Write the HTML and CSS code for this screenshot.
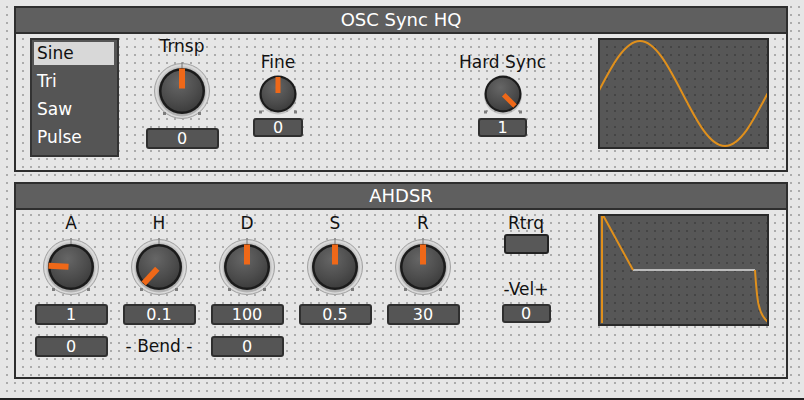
FILE: index.html
```html
<!DOCTYPE html>
<html>
<head>
<meta charset="utf-8">
<link rel="stylesheet" href="styles.css">
</head>
<body>
<div class="app">
  <svg class="defs" width="0" height="0">
    <defs>
      <radialGradient id="kb" cx="0.42" cy="0.3" r="0.8">
        <stop offset="0" stop-color="#666"/>
        <stop offset="0.6" stop-color="#4c4c4c"/>
        <stop offset="1" stop-color="#383838"/>
      </radialGradient>
      <radialGradient id="halo" cx="0.5" cy="0.5" r="0.5">
        <stop offset="0.78" stop-color="#8e8e8e"/>
        <stop offset="0.86" stop-color="#c4c4c4"/>
        <stop offset="0.94" stop-color="#dcdcdc"/>
        <stop offset="1" stop-color="#d0d0d0"/>
      </radialGradient>
      <symbol id="bigknob" viewBox="0 0 58 58">
        <circle cx="29" cy="29" r="27.5" fill="url(#halo)" stroke="#a2a2a2" stroke-width="1"/>
        <rect x="28.5" y="0" width="1" height="6" fill="#777"/>
        <rect x="10" y="50" width="3" height="3" fill="#7c7c7c"/>
        <rect x="45" y="50" width="3" height="3" fill="#7c7c7c"/>
        <circle cx="29" cy="31" r="23.5" fill="#9a9a9a" opacity="0.55"/>
        <circle cx="29" cy="29" r="23" fill="#1b1b1b"/>
        <circle cx="29" cy="29" r="20.5" fill="url(#kb)"/>
      </symbol>
      <symbol id="smallknob" viewBox="0 0 44 42">
        <rect x="3" y="36.5" width="3" height="3" fill="#7c7c7c"/>
        <rect x="38" y="36.5" width="3" height="3" fill="#7c7c7c"/>
        <circle cx="22" cy="21.5" r="19" fill="#9a9a9a" opacity="0.45"/>
        <circle cx="22" cy="20" r="18.5" fill="#1b1b1b"/>
        <circle cx="22" cy="20" r="16.3" fill="url(#kb)"/>
      </symbol>
    </defs>
  </svg>

  <section class="panel p1">
    <div class="head">OSC Sync HQ</div>
    <div class="body">
      <ul class="list">
        <li class="sel">Sine</li>
        <li>Tri</li>
        <li>Saw</li>
        <li>Pulse</li>
      </ul>

      <div class="ctl c-trnsp">
        <div class="lbl">Trnsp</div>
        <svg class="kbig" viewBox="0 0 58 58"><use href="#bigknob" width="58" height="58"/><rect class="ind" x="26" y="6.5" width="6" height="20"/></svg>
        <div class="val w73">0</div>
      </div>

      <div class="ctl c-fine">
        <div class="lbl">Fine</div>
        <svg class="ksmall" viewBox="0 0 44 42"><use href="#smallknob" width="44" height="42"/><rect class="ind" x="19.5" y="3" width="5" height="16"/></svg>
        <div class="val sm w50">0</div>
      </div>

      <div class="ctl c-hard">
        <div class="lbl">Hard Sync</div>
        <svg class="ksmall" viewBox="0 0 44 42"><use href="#smallknob" width="44" height="42"/><rect class="ind" x="19.5" y="3" width="5" height="16" transform="rotate(135 22 20)"/></svg>
        <div class="val sm w49">1</div>
      </div>

      <div class="scope s1">
        <svg viewBox="0 0 167 107" width="167" height="107">
          <path class="wave" d="M-2.5,53.5 C11.36,26.6 24.62,1 40,1 C55.38,1 68.64,26.6 82.5,53.5 C96.36,80.4 109.62,106 125,106 C140.38,106 153.64,80.4 167.5,53.5"/>
        </svg>
      </div>
    </div>
  </section>

  <section class="panel p2">
    <div class="head">AHDSR</div>
    <div class="body">
      <div class="ctl c-env first">
        <div class="lbl">A</div>
        <svg class="kbig" viewBox="0 0 58 58"><use href="#bigknob" width="58" height="58"/><rect class="ind" x="26" y="6.5" width="6" height="20" transform="rotate(-87 29 29)"/></svg>
        <div class="val w73">1</div>
        <div class="val w73 row2">0</div>
      </div>
      <div class="ctl c-env">
        <div class="lbl">H</div>
        <svg class="kbig" viewBox="0 0 58 58"><use href="#bigknob" width="58" height="58"/><rect class="ind" x="26" y="6.5" width="6" height="20" transform="rotate(-137 29 29)"/></svg>
        <div class="val w73">0.1</div>
        <div class="bend row2">- Bend -</div>
      </div>
      <div class="ctl c-env">
        <div class="lbl">D</div>
        <svg class="kbig" viewBox="0 0 58 58"><use href="#bigknob" width="58" height="58"/><rect class="ind" x="26" y="6.5" width="6" height="20"/></svg>
        <div class="val w73">100</div>
        <div class="val w73 row2">0</div>
      </div>
      <div class="ctl c-env">
        <div class="lbl">S</div>
        <svg class="kbig" viewBox="0 0 58 58"><use href="#bigknob" width="58" height="58"/><rect class="ind" x="26" y="6.5" width="6" height="20"/></svg>
        <div class="val w73">0.5</div>
      </div>
      <div class="ctl c-env">
        <div class="lbl">R</div>
        <svg class="kbig" viewBox="0 0 58 58"><use href="#bigknob" width="58" height="58"/><rect class="ind" x="26" y="6.5" width="6" height="20"/></svg>
        <div class="val w73">30</div>
      </div>

      <div class="ctl c-rtrq">
        <div class="lbl">Rtrq</div>
        <div class="btn"></div>
        <div class="lbl vel">-Vel+</div>
        <div class="val sm w49">0</div>
      </div>

      <div class="scope s2">
        <svg viewBox="0 0 167 108" width="167" height="108">
          <path class="sus" d="M33,54 L155,54"/>
          <path class="wave" d="M2,107 L2,1 L4,1 L33,54"/>
          <path class="wave" d="M155,54 C157,84 158,98 168,106"/>
        </svg>
      </div>
    </div>
  </section>

  <div class="foot"></div>
</div>
</body>
</html>
```

FILE: styles.css
```css
html, body {
  margin: 0;
  padding: 0;
}

body {
  width: 804px;
  height: 400px;
  overflow: hidden;
  font-family: "DejaVu Sans", "Liberation Sans", sans-serif;
  background-color: #e6e6e6;
  background-image:
    linear-gradient(to bottom, transparent 2px, #e6e6e6 2px),
    linear-gradient(to right, #ababab 2px, #e6e6e6 2px);
  background-size: 8px 8px;
  background-position: 6px 6px;
  background-attachment: fixed;
}

.app {
  height: 400px;
  display: flex;
  flex-direction: column;
}

.defs {
  display: block;
  width: 0;
  height: 0;
  overflow: hidden;
}

.panel {
  box-sizing: border-box;
  width: 774px;
  margin-left: 14px;
  border: 2px solid #2e2e2e;
  display: flex;
  flex-direction: column;
}

.p1 {
  margin-top: 6px;
  height: 166px;
}

.p2 {
  margin-top: 10px;
  height: 197px;
}

.head {
  height: 24px;
  flex: none;
  background: #5f5f5f;
  border-bottom: 2px solid #2e2e2e;
  color: #fff;
  text-align: center;
  font-size: 18px;
  line-height: 24px;
}

.body {
  flex: 1;
  display: flex;
  align-items: flex-start;
}

.foot {
  margin-top: auto;
  height: 2px;
  background: #222;
}

/* list */
.list {
  box-sizing: border-box;
  width: 89px;
  height: 119px;
  margin: 4px 0 0 14px;
  padding: 2px 3px 0 2px;
  list-style: none;
  border: 2px solid #333;
  background: #555;
}

.list li {
  height: 23px;
  line-height: 23px;
  margin-bottom: 5px;
  padding-left: 3px;
  color: #fff;
  font-size: 17px;
}

.list li.sel {
  background: #d8d8d8;
  color: #111;
}

/* controls */
.ctl {
  display: flex;
  flex-direction: column;
  align-items: center;
  flex: none;
}

.lbl {
  height: 18px;
  line-height: 18px;
  font-size: 17px;
  color: #111;
  white-space: nowrap;
}

.kbig {
  display: block;
  width: 58px;
  height: 58px;
}

.ksmall {
  display: block;
  width: 44px;
  height: 42px;
}

.ind {
  fill: #ef6818;
}

.val {
  box-sizing: border-box;
  height: 21px;
  border: 2px solid #2f2f2f;
  border-radius: 3px;
  background: #555;
  color: #fff;
  font-size: 16px;
  line-height: 17px;
  text-align: center;
}

.val.sm {
  height: 19px;
  line-height: 15px;
}

.w73 { width: 73px; }
.w50 { width: 50px; }
.w49 { width: 49px; }

.c-trnsp {
  width: 80px;
  margin-left: 23px;
  padding-top: 3px;
}
.c-trnsp .kbig { margin-top: 7px; }
.c-trnsp .val { margin-top: 8px; }

.c-fine {
  width: 60px;
  margin-left: 26px;
  padding-top: 19px;
}
.c-hard {
  width: 101px;
  margin-left: 144px;
  padding-top: 19px;
}
.c-fine .ksmall, .c-hard .ksmall { margin-top: 3px; }
.c-fine .val, .c-hard .val { margin-top: 2px; }

.c-env {
  width: 88px;
  padding-top: 4px;
}
.c-env.first { margin-left: 11px; }
.c-env .kbig { margin-top: 6px; }
.c-env .val { margin-top: 8px; }
.c-env .row2 { margin-top: 11px; }

.bend {
  height: 21px;
  line-height: 21px;
  font-size: 17px;
  color: #111;
  white-space: nowrap;
}

.c-rtrq {
  width: 62px;
  margin-left: 28px;
  padding-top: 4px;
}

.btn {
  box-sizing: border-box;
  width: 45px;
  height: 20px;
  margin-top: 2px;
  border: 2px solid #222;
  border-radius: 3px;
  background: #585858;
}

.c-rtrq .vel { margin-top: 26px; }
.c-rtrq .val { margin-top: 6px; }

/* scopes */
.scope {
  box-sizing: border-box;
  width: 171px;
  margin-top: 4px;
  border: 2px solid #2a2a2a;
  background-color: #575757;
  background-image:
    linear-gradient(to bottom, transparent 2px, #575757 2px),
    linear-gradient(to right, #454545 2px, #575757 2px);
  background-size: 8px 8px;
  background-position: 6px 6px;
  background-attachment: fixed;
  overflow: hidden;
}

.scope svg {
  display: block;
}

.s1 {
  height: 111px;
  margin-left: 45px;
}

.s2 {
  height: 112px;
  margin-left: 41px;
}

.wave {
  fill: none;
  stroke: #e0901c;
  stroke-width: 2;
}

.sus {
  fill: none;
  stroke: #bcbcbc;
  stroke-width: 2;
}
```
